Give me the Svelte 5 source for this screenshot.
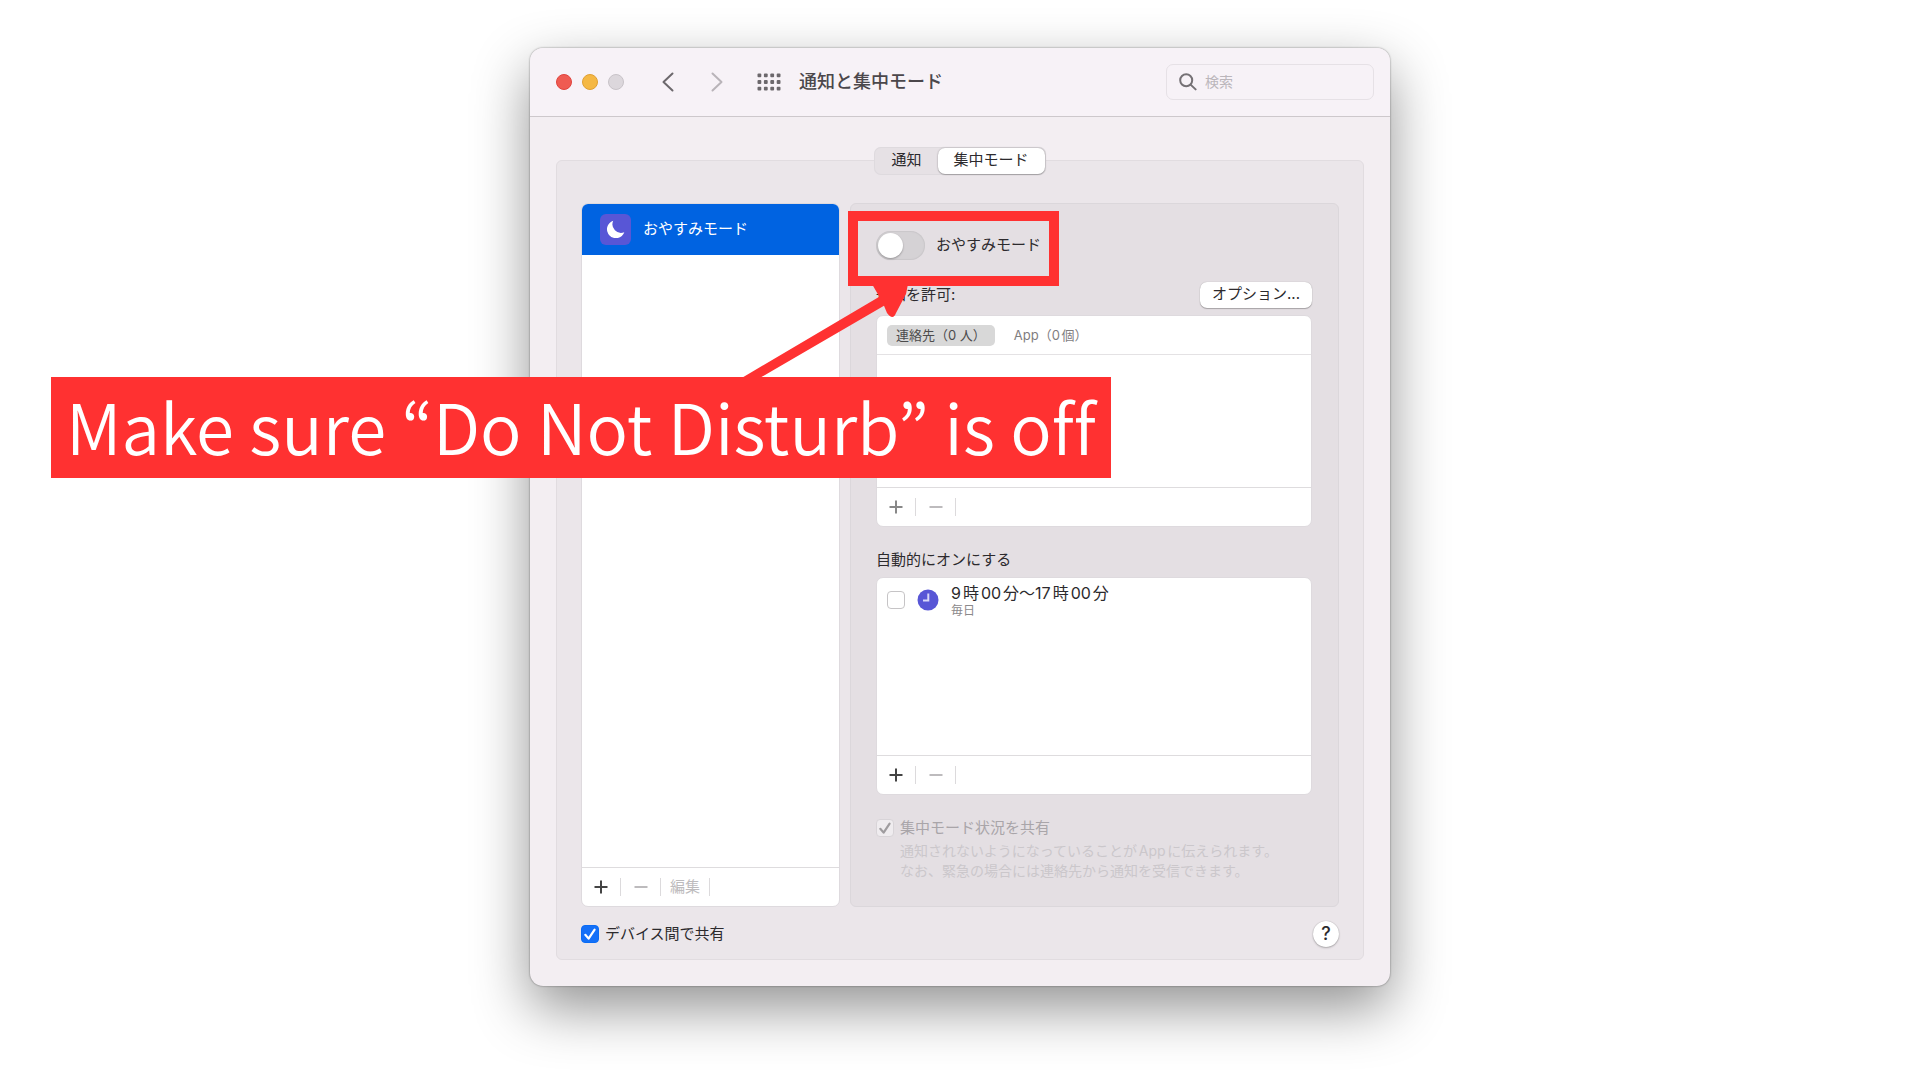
<script lang="ts">
  let tab = $state("focus");
  let allowTab = $state("people");
  let doNotDisturb = $state(false);
  let scheduleOn = $state(false);
  let shareStatus = $state(true);
  let shareDevices = $state(true);
  let query = $state("");
</script>

{#snippet plus()}
  <svg width="14" height="14" viewBox="0 0 14 14"><path d="M7 0.5V13.5M0.5 7H13.5" /></svg>
{/snippet}

{#snippet minus()}
  <svg width="14" height="14" viewBox="0 0 14 14"><path d="M0.5 7H13.5" /></svg>
{/snippet}

<main class="stage">
  <div class="window">
    <header class="toolbar">
      <div class="lights">
        <button class="light close" aria-label="閉じる"></button>
        <button class="light minimize" aria-label="しまう"></button>
        <button class="light zoom" aria-label="拡大" disabled></button>
      </div>
      <button class="nav back" aria-label="戻る">
        <svg width="12" height="20" viewBox="0 0 12 20"><path d="M10.5 1.5L1.5 10L10.5 18.5" /></svg>
      </button>
      <button class="nav forward" aria-label="進む" disabled>
        <svg width="12" height="20" viewBox="0 0 12 20"><path d="M1.5 1.5L10.5 10L1.5 18.5" /></svg>
      </button>
      <button class="nav all" aria-label="すべてを表示">
        <svg width="24" height="18" viewBox="0 0 24 18">
          {#each [0, 1, 2] as row}
            {#each [0, 1, 2, 3] as col}
              <rect x={0.5 + col * 6.4} y={0.4 + row * 6.7} width="3.8" height="3.8" rx="1" />
            {/each}
          {/each}
        </svg>
      </button>
      <h1>通知と集中モード</h1>
      <label class="search">
        <svg width="18" height="18" viewBox="0 0 18 18">
          <circle cx="7.2" cy="7.2" r="6" />
          <path d="M11.6 11.6L16.6 16.4" />
        </svg>
        <input type="text" placeholder="検索" aria-label="検索" bind:value={query} />
      </label>
    </header>

    <div class="content">
      <div class="segmented">
        <button class:active={tab === "notifications"} onclick={() => (tab = "notifications")}>通知</button>
        <button class:active={tab === "focus"} onclick={() => (tab = "focus")}>集中モード</button>
      </div>

      <section class="group">
        <div class="columns">
          <div class="list sidebar">
            <button class="mode">
              <span class="mode-icon">
                <svg width="18" height="18" viewBox="0 0 18 18">
                  <path d="M6.2 0.8A8.6 8.6 0 0 0 17.3 12.2A8.9 8.9 0 1 1 6.2 0.8Z" />
                </svg>
              </span>
              おやすみモード
            </button>
            <div class="rows"></div>
            <div class="list-footer">
              <button aria-label="追加">{@render plus()}</button>
              <button aria-label="削除" disabled>{@render minus()}</button>
              <button class="edit" disabled>編集</button>
            </div>
          </div>

          <div class="panel">
            <label class="toggle-row">
              <input class="switch" type="checkbox" role="switch" bind:checked={doNotDisturb} />
              おやすみモード
            </label>

            <div class="allow-row">
              <h2>通知を許可:</h2>
              <button class="options">オプション...</button>
            </div>
            <div class="list allow-list">
              <div class="list-tabs">
                <button class:active={allowTab === "people"} onclick={() => (allowTab = "people")}>連絡先（0 人）</button>
                <button class:active={allowTab === "apps"} onclick={() => (allowTab = "apps")}>App（0個）</button>
              </div>
              <div class="rows"></div>
              <div class="list-footer muted">
                <button aria-label="追加">{@render plus()}</button>
                <button aria-label="削除" disabled>{@render minus()}</button>
              </div>
            </div>

            <h2 class="auto-title">自動的にオンにする</h2>
            <div class="list auto-list">
              <div class="rows">
                <label class="schedule">
                  <input class="check" type="checkbox" bind:checked={scheduleOn} />
                  <svg width="22" height="22" viewBox="0 0 22 22">
                    <circle cx="11" cy="11" r="10.5" />
                    <path d="M11.3 4.6V11.5H6" />
                  </svg>
                  <span class="schedule-text">
                    <span class="time">9時00分〜17時00分</span>
                    <span class="repeat">毎日</span>
                  </span>
                </label>
              </div>
              <div class="list-footer">
                <button aria-label="追加">{@render plus()}</button>
                <button aria-label="削除" disabled>{@render minus()}</button>
              </div>
            </div>

            <label class="share-status">
              <input class="check" type="checkbox" disabled bind:checked={shareStatus} />
              集中モード状況を共有
            </label>
            <p class="note">
              通知されないようになっていることがAppに伝えられます。<br />
              なお、緊急の場合には連絡先から通知を受信できます。
            </p>
          </div>
        </div>

        <div class="group-footer">
          <label>
            <input class="check" type="checkbox" bind:checked={shareDevices} />
            デバイス間で共有
          </label>
          <button class="help" aria-label="ヘルプ">?</button>
        </div>
      </section>
    </div>

    <!-- callout drawn over the window -->
    <div class="highlight"></div>
    <svg class="arrow" width="184" height="100" viewBox="0 0 184 100">
      <path d="M10 98L149.3 15.7L142 3H178L176 13L166 32Q163 40 157 32L154 24.7L28 98Z" />
    </svg>
    <p class="callout">Make sure “Do Not Disturb” is off</p>
  </div>
</main>

<style>
  :global(body) {
    margin: 0;
    background: #fff;
  }

  .stage {
    display: flex;
    justify-content: center;
    padding: 48px 24px 94px;
    overflow: hidden;
    font-family: Inter, "Noto Sans CJK JP", sans-serif;
    font-size: 15px;
    line-height: 24px;
    color: #2c2a2d;
    text-autospace: normal;
  }

  .window {
    position: relative;
    box-sizing: border-box;
    width: 100%;
    max-width: 860px;
    border-radius: 13px;
    background: #f3eef2;
    box-shadow:
      0 0 2px rgba(0, 0, 0, 0.5),
      0 22px 56px rgba(0, 0, 0, 0.43);
  }

  button,
  input {
    margin: 0;
    padding: 0;
    border: none;
    background: none;
    color: inherit;
    font: inherit;
    line-height: inherit;
  }

  h1,
  h2,
  p {
    margin: 0;
    font-weight: 400;
  }

  svg {
    display: block;
    flex: none;
  }

  .toolbar {
    display: flex;
    align-items: center;
    height: 68px;
    padding: 0 16px 0 26px;
    border-bottom: 1px solid #cdc8cc;
    border-radius: 13px 13px 0 0;
    background: #f7f2f7;
  }

  .lights {
    display: flex;
    gap: 10px;
    margin-right: 38px;
  }

  .light {
    box-sizing: border-box;
    width: 16px;
    height: 16px;
    border: 1px solid;
    border-radius: 50%;
  }

  .close {
    border-color: #e0443e;
    background: #ef5b52;
  }

  .minimize {
    border-color: #e0a033;
    background: #f5b844;
  }

  .zoom {
    border-color: #c8c3c8;
    background: #dcd7dc;
  }

  .nav svg {
    fill: none;
    stroke: #6c686c;
    stroke-width: 2;
    stroke-linecap: round;
    stroke-linejoin: round;
  }

  .back {
    margin-right: 37px;
  }

  .forward {
    margin-right: 34px;
  }

  .forward svg {
    stroke: #b9b4b9;
  }

  .all {
    margin-right: 18px;
  }

  .all svg {
    fill: #6c686c;
    stroke: none;
  }

  h1 {
    flex: 1;
    font-size: 18px;
    font-weight: 500;
    color: #4b474b;
  }

  .search {
    display: flex;
    align-items: center;
    gap: 8px;
    box-sizing: border-box;
    width: 208px;
    height: 36px;
    padding: 0 12px;
    border: 1px solid #e6e1e6;
    border-radius: 7px;
  }

  .search svg {
    fill: none;
    stroke: #757175;
    stroke-width: 2;
    stroke-linecap: round;
  }

  .search input {
    flex: 1;
    min-width: 0;
    outline: none;
    font-size: 14px;
  }

  .search input::placeholder {
    color: #bbb6bb;
    opacity: 1;
  }

  .content {
    display: flex;
    flex-direction: column;
    padding: 30px 26px 26px;
  }

  .segmented {
    z-index: 1;
    display: flex;
    align-self: center;
    box-sizing: border-box;
    height: 28px;
    padding: 1px;
    border-radius: 7px;
    background: #e6e1e5;
    box-shadow: inset 0 0 0 1px #dedade;
  }

  .segmented button {
    padding: 0 16px 2px;
    border-radius: 7px;
  }

  .segmented .active {
    background: #fff;
    box-shadow: 0 0 2px rgba(0, 0, 0, 0.3), 0 1px 1px rgba(0, 0, 0, 0.2);
  }

  .group {
    margin-top: -15px;
    padding: 42px 24px 9px;
    border: 1px solid #e1dce0;
    border-radius: 6px;
    background: #ebe6ea;
  }

  .columns {
    display: flex;
    gap: 10px;
  }

  .list {
    display: flex;
    flex-direction: column;
    border: 1px solid #dedade;
    border-radius: 7px;
    background: #fff;
    overflow: hidden;
  }

  .sidebar {
    box-sizing: border-box;
    width: 259px;
  }

  .rows {
    flex: 1;
  }

  .mode {
    display: flex;
    align-items: center;
    gap: 12px;
    height: 52px;
    margin: -1px -1px 0;
    padding-left: 19px;
    background: #0063e1;
    color: #fff;
  }

  .mode-icon {
    display: grid;
    place-items: center;
    width: 31px;
    height: 31px;
    border-radius: 6px;
    background: #5856d6;
  }

  .mode-icon svg {
    fill: #fff;
  }

  .list-footer {
    display: flex;
    align-items: center;
    height: 38px;
    border-top: 1px solid #dedcde;
  }

  .list-footer button {
    display: grid;
    place-items: center;
    box-sizing: border-box;
    width: 40px;
    height: 18px;
    border-right: 1px solid #dcdadc;
    line-height: 18px;
  }

  .list-footer button:first-child {
    width: 39px;
  }

  .list-footer svg {
    stroke: #444;
    stroke-width: 2;
  }

  .list-footer.muted svg {
    stroke: #888;
  }

  .list-footer button:disabled {
    color: #bdbbbd;
  }

  .list-footer button:disabled svg {
    stroke: #bdbbbd;
  }

  .list-footer .edit {
    width: 49px;
  }

  .panel {
    flex: 1;
    min-width: 0;
    padding: 25px 26px 25px 25px;
    border: 1px solid #dbd7db;
    border-radius: 6px;
    background: #e4dfe3;
  }

  .toggle-row {
    display: flex;
    align-items: center;
    gap: 11px;
    height: 32px;
  }

  .switch {
    appearance: none;
    width: 49px;
    height: 29px;
    border-radius: 15px;
    background: #d5d2d5;
    box-shadow: inset 0 0 1px 1px #cac7ca;
  }

  .switch::before {
    content: "";
    display: block;
    width: 25px;
    height: 25px;
    margin: 2px;
    border-radius: 50%;
    background: #fff;
    box-shadow: 0 1px 2px rgba(0, 0, 0, 0.3);
  }

  .switch:checked {
    background: #0a6cf5;
  }

  .switch:checked::before {
    margin-left: 22px;
  }

  h2 {
    font-size: 15px;
  }

  .allow-row {
    display: flex;
    align-items: center;
    justify-content: space-between;
    height: 28px;
    margin-top: 20px;
  }

  .options {
    height: 26px;
    padding: 0 12px 2px;
    border-radius: 7px;
    background: #fff;
    box-shadow: 0 0 1px rgba(0, 0, 0, 0.3), 0 1px 1px rgba(0, 0, 0, 0.25);
  }

  .allow-list {
    height: 210px;
    margin-top: 6px;
  }

  .list-tabs {
    display: flex;
    align-items: center;
    gap: 10px;
    height: 38px;
    padding-left: 10px;
    border-bottom: 1px solid #e4e2e4;
    font-size: 13px;
    line-height: 21px;
    color: #7f7d7f;
  }

  .list-tabs button {
    height: 21px;
    padding: 0 9px;
    border-radius: 5px;
  }

  .list-tabs .active {
    background: #d8d8d8;
    color: #4c4b4c;
  }

  .auto-title {
    margin-top: 21px;
  }

  .auto-list {
    height: 216px;
    margin-top: 5px;
  }

  .schedule {
    display: flex;
    align-items: center;
    padding: 4px 10px;
  }

  .schedule svg {
    margin: 0 12px;
    fill: #5856d6;
  }

  .schedule path {
    fill: none;
    stroke: #d9d8f8;
    stroke-width: 2;
  }

  .schedule-text {
    display: flex;
    flex-direction: column;
  }

  .time {
    font-size: 16px;
    line-height: 22px;
  }

  .repeat {
    font-size: 12px;
    line-height: 14px;
    color: #8b898b;
  }

  .check {
    appearance: none;
    box-sizing: border-box;
    width: 18px;
    height: 18px;
    border: 1px solid #c6c4c6;
    border-radius: 4px;
    background: #fff;
  }

  .check:checked {
    border-color: #0a6cf5;
    background: #1470f8
      url("data:image/svg+xml,%3Csvg xmlns='http://www.w3.org/2000/svg' viewBox='0 0 16 16'%3E%3Cpath d='M3.3 8.8L6.6 12.6L12.6 3.6' fill='none' stroke='white' stroke-width='2.2' stroke-linecap='round' stroke-linejoin='round'/%3E%3C/svg%3E");
  }

  .check:checked:disabled {
    border-color: #d8d4d8;
    background: #efecef
      url("data:image/svg+xml,%3Csvg xmlns='http://www.w3.org/2000/svg' viewBox='0 0 16 16'%3E%3Cpath d='M3.3 8.8L6.6 12.6L12.6 3.6' fill='none' stroke='%239f9c9f' stroke-width='2.2' stroke-linecap='round' stroke-linejoin='round'/%3E%3C/svg%3E");
  }

  .share-status {
    display: flex;
    align-items: center;
    gap: 6px;
    margin-top: 21px;
    color: #a9a5a9;
  }

  .note {
    margin-top: 1px;
    padding-left: 24px;
    font-size: 14px;
    line-height: 20px;
    color: #cbc7cb;
    white-space: nowrap;
  }

  .group-footer {
    display: flex;
    align-items: center;
    justify-content: space-between;
    margin-top: 11px;
    height: 32px;
  }

  .group-footer label {
    display: flex;
    align-items: center;
    gap: 6px;
  }

  .help {
    width: 26px;
    height: 26px;
    border-radius: 50%;
    background: #fff;
    box-shadow: 0 0 1px rgba(0, 0, 0, 0.3), 0 1px 2px rgba(0, 0, 0, 0.25);
    font-size: 18px;
    font-weight: 500;
  }

  .highlight {
    position: absolute;
    top: 163px;
    left: 318px;
    box-sizing: border-box;
    width: 211px;
    height: 75px;
    border: 10px solid #ff3131;
    pointer-events: none;
  }

  .arrow {
    position: absolute;
    top: 233px;
    left: 200px;
    fill: #ff3131;
    pointer-events: none;
  }

  .callout {
    position: absolute;
    top: 329px;
    left: -479px;
    padding: 0 15px 5px;
    background: #ff3131;
    color: #fff;
    font-family: "Noto Sans CJK JP", sans-serif;
    font-size: 69px;
    font-weight: 350;
    font-variant-ligatures: none;
    line-height: 96px;
    white-space: nowrap;
  }
</style>
